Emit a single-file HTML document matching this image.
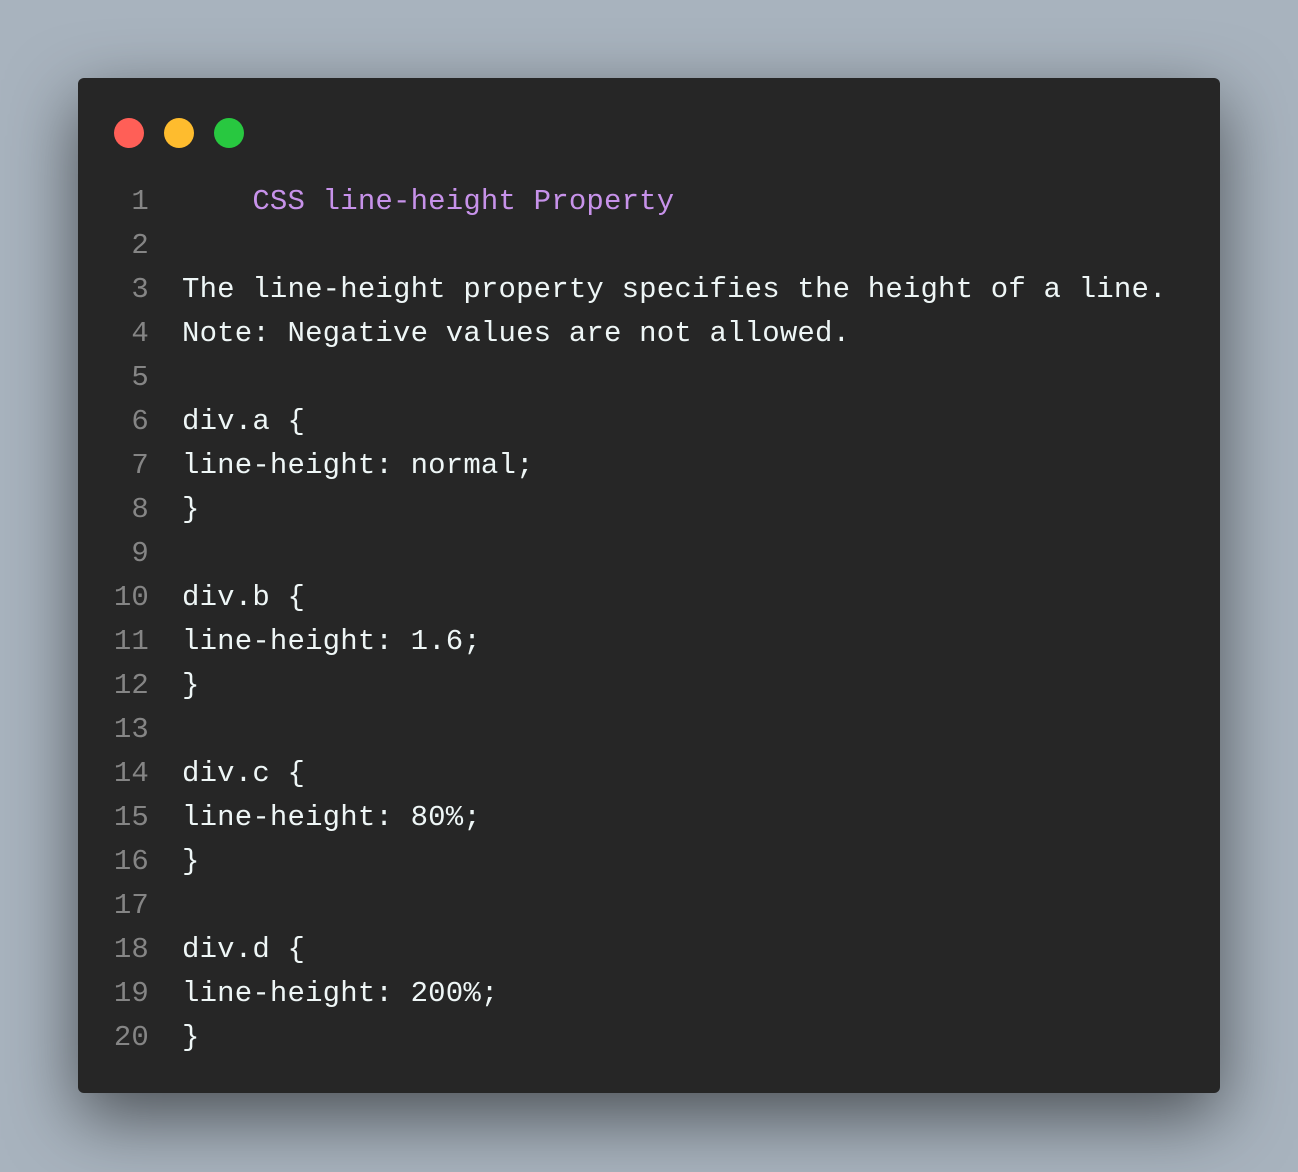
<!DOCTYPE html>
<html><head><meta charset="utf-8"><style>
html,body{margin:0;padding:0}
body{width:1298px;height:1172px;background:#a8b3be;position:relative;overflow:hidden}
.win{position:absolute;left:78px;top:78px;width:1142px;height:1015px;background:#262626;border-radius:6px;box-shadow:0 24px 70px rgba(0,0,0,0.55)}
.dot{position:absolute;top:40px;width:30px;height:30px;border-radius:50%}
.code{position:absolute;left:0;top:102px;font-family:"Liberation Mono",monospace;font-size:29px;line-height:44px;letter-spacing:0.18px}
.ln{position:absolute;left:0;top:0;width:71px;text-align:right;color:#858585;white-space:pre}
.tx{position:absolute;left:104px;top:0;color:#eef6f6;white-space:pre}
.p{color:#c792ea}
</style></head><body>
<div class="win">
<div class="dot" style="left:36px;background:#ff5f57"></div>
<div class="dot" style="left:86px;background:#febc2e"></div>
<div class="dot" style="left:136px;background:#28c840"></div>
<div class="code"><div class="ln">1
2
3
4
5
6
7
8
9
10
11
12
13
14
15
16
17
18
19
20</div><div class="tx"><span class="p">    CSS line-height Property</span>

The line-height property specifies the height of a line.
Note: Negative values are not allowed.

div.a {
line-height: normal;
}

div.b {
line-height: 1.6;
}

div.c {
line-height: 80%;
}

div.d {
line-height: 200%;
}</div></div>
</div>
</body></html>
